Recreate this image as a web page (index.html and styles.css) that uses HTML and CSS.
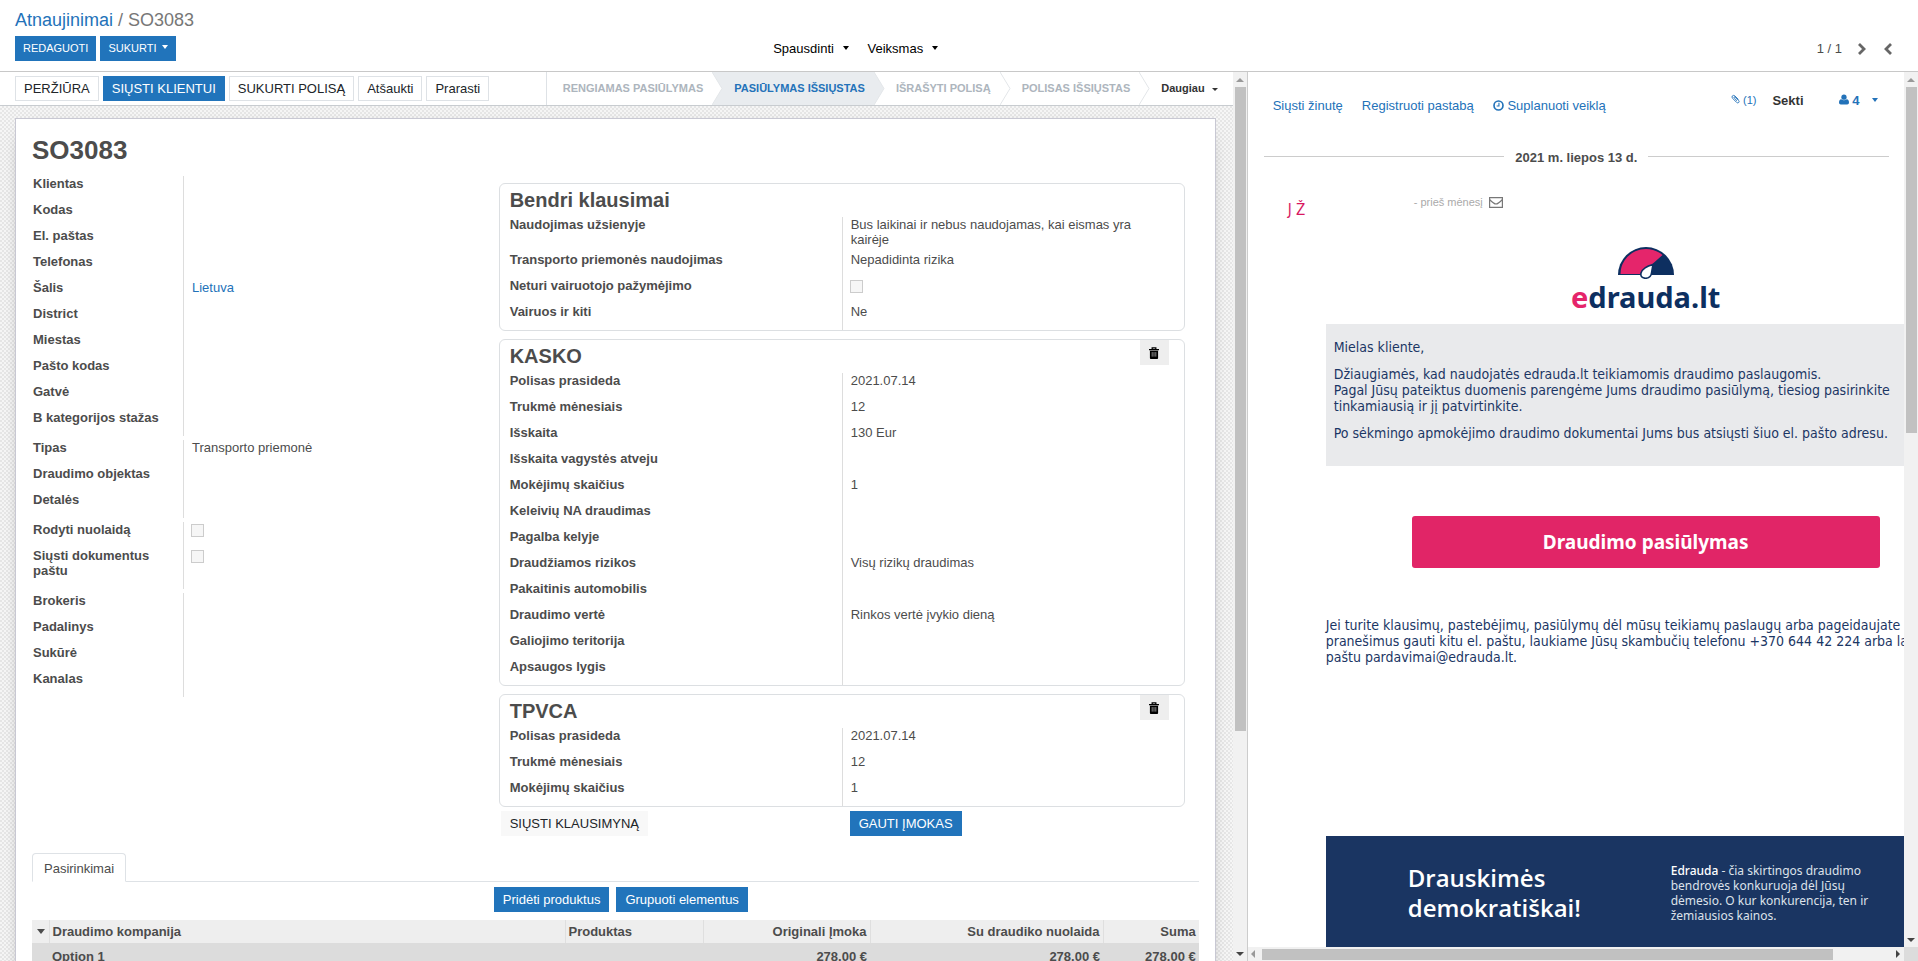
FILE: index.html
```html
<!DOCTYPE html>
<html lang="lt">
<head>
    <meta charset="utf-8">
    <title>SO3083 - Atnaujinimai</title>
    <link rel="stylesheet" href="styles.css">
</head>
<body>
    <header class="control-panel">
        <div class="breadcrumb"><a href="#">Atnaujinimai</a> / <span>SO3083</span></div>
        <div class="cp-row">
            <div class="cp-left">
                <button class="btn btn-primary btn-sm">REDAGUOTI</button>
                <button class="btn btn-primary btn-sm">SUKURTI <i class="caret"></i></button>
            </div>
            <div class="cp-center">
                <button class="btn-plain">Spausdinti <i class="caret"></i></button>
                <button class="btn-plain">Veiksmas <i class="caret"></i></button>
            </div>
            <div class="pager">
                <span>1 / 1</span>
                <button class="btn-plain" aria-label="Kitas"><svg width="9" height="12" viewBox="0 0 9 12"><path d="M2 1l5 5-5 5" fill="none" stroke="#666" stroke-width="2.8"/></svg></button>
                <button class="btn-plain" aria-label="Ankstesnis"><svg width="9" height="12" viewBox="0 0 9 12"><path d="M7 1L2 6l5 5" fill="none" stroke="#666" stroke-width="2.8"/></svg></button>
            </div>
        </div>
    </header>

    <main class="content">
        <section class="form-view">
            <div class="statusbar">
                <div class="status-buttons">
                    <button class="btn btn-default">PERŽIŪRA</button>
                    <button class="btn btn-primary">SIŲSTI KLIENTUI</button>
                    <button class="btn btn-default">SUKURTI POLISĄ</button>
                    <button class="btn btn-default">Atšaukti</button>
                    <button class="btn btn-default">Prarasti</button>
                </div>
                <div class="stages">
                    <button class="stage">RENGIAMAS PASIŪLYMAS<svg class="stage-arrow" viewBox="0 0 11 33"><path d="M0 0L10 16.500L0 33"/></svg></button>
                    <button class="stage active">PASIŪLYMAS IŠSIŲSTAS<svg class="stage-arrow" viewBox="0 0 11 33"><path d="M0 0L10 16.500L0 33"/></svg></button>
                    <button class="stage">IŠRAŠYTI POLISĄ<svg class="stage-arrow" viewBox="0 0 11 33"><path d="M0 0L10 16.500L0 33"/></svg></button>
                    <button class="stage">POLISAS IŠSIŲSTAS<svg class="stage-arrow" viewBox="0 0 11 33"><path d="M0 0L10 16.500L0 33"/></svg></button>
                    <button class="stage more">Daugiau <i class="caret"></i></button>
                </div>
            </div>

            <div class="sheet-bg">
                <div class="sheet">
                    <h1>SO3083</h1>
                    <div class="groups">
                        <div class="group-left">
                            <dl class="fields">
                                <dt>Klientas</dt><dd></dd>
                                <dt>Kodas</dt><dd></dd>
                                <dt>El. paštas</dt><dd></dd>
                                <dt>Telefonas</dt><dd></dd>
                                <dt>Šalis</dt><dd><a href="#">Lietuva</a></dd>
                                <dt>District</dt><dd></dd>
                                <dt>Miestas</dt><dd></dd>
                                <dt>Pašto kodas</dt><dd></dd>
                                <dt>Gatvė</dt><dd></dd>
                                <dt>B kategorijos stažas</dt><dd></dd>
                            </dl>
                            <dl class="fields">
                                <dt>Tipas</dt><dd>Transporto priemonė</dd>
                                <dt>Draudimo objektas</dt><dd></dd>
                                <dt>Detalės</dt><dd></dd>
                            </dl>
                            <dl class="fields">
                                <dt><label for="discount">Rodyti nuolaidą</label></dt><dd><input type="checkbox" id="discount" disabled></dd>
                                <dt><label for="post">Siųsti dokumentus paštu</label></dt><dd><input type="checkbox" id="post" disabled></dd>
                            </dl>
                            <dl class="fields">
                                <dt>Brokeris</dt><dd></dd>
                                <dt>Padalinys</dt><dd></dd>
                                <dt>Sukūrė</dt><dd></dd>
                                <dt>Kanalas</dt><dd></dd>
                            </dl>
                        </div>

                        <div class="group-right">
                            <div class="card">
                                <div class="card-head"><h2>Bendri klausimai</h2></div>
                                <dl class="fields">
                                    <dt>Naudojimas užsienyje</dt><dd>Bus laikinai ir nebus naudojamas, kai eismas yra kairėje</dd>
                                    <dt>Transporto priemonės naudojimas</dt><dd>Nepadidinta rizika</dd>
                                    <dt><label for="licence">Neturi vairuotojo pažymėjimo</label></dt><dd><input type="checkbox" id="licence" disabled></dd>
                                    <dt>Vairuos ir kiti</dt><dd>Ne</dd>
                                </dl>
                            </div>
                            <div class="card">
                                <div class="card-head">
                                    <h2>KASKO</h2>
                                    <button class="btn-trash" aria-label="Ištrinti"><svg width="10" height="12" viewBox="0 0 11 13"><path d="M3.500 2V.8h4V2" fill="none" stroke="#000" stroke-width="1.400"/><path d="M0 2h11v1.600H0zM1 4h9v8q0 1-1 1H2q-1 0-1-1z"/><path d="M3.500 5.500v5M5.500 5.500v5M7.500 5.500v5" stroke="#bbb" stroke-width=".8"/></svg></button>
                                </div>
                                <dl class="fields">
                                    <dt>Polisas prasideda</dt><dd>2021.07.14</dd>
                                    <dt>Trukmė mėnesiais</dt><dd>12</dd>
                                    <dt>Išskaita</dt><dd>130 Eur</dd>
                                    <dt>Išskaita vagystės atveju</dt><dd></dd>
                                    <dt>Mokėjimų skaičius</dt><dd>1</dd>
                                    <dt>Keleivių NA draudimas</dt><dd></dd>
                                    <dt>Pagalba kelyje</dt><dd></dd>
                                    <dt>Draudžiamos rizikos</dt><dd>Visų rizikų draudimas</dd>
                                    <dt>Pakaitinis automobilis</dt><dd></dd>
                                    <dt>Draudimo vertė</dt><dd>Rinkos vertė įvykio dieną</dd>
                                    <dt>Galiojimo teritorija</dt><dd></dd>
                                    <dt>Apsaugos lygis</dt><dd></dd>
                                </dl>
                            </div>
                            <div class="card">
                                <div class="card-head">
                                    <h2>TPVCA</h2>
                                    <button class="btn-trash" aria-label="Ištrinti"><svg width="10" height="12" viewBox="0 0 11 13"><path d="M3.500 2V.8h4V2" fill="none" stroke="#000" stroke-width="1.400"/><path d="M0 2h11v1.600H0zM1 4h9v8q0 1-1 1H2q-1 0-1-1z"/><path d="M3.500 5.500v5M5.500 5.500v5M7.500 5.500v5" stroke="#bbb" stroke-width=".8"/></svg></button>
                                </div>
                                <dl class="fields">
                                    <dt>Polisas prasideda</dt><dd>2021.07.14</dd>
                                    <dt>Trukmė mėnesiais</dt><dd>12</dd>
                                    <dt>Mokėjimų skaičius</dt><dd>1</dd>
                                </dl>
                            </div>
                            <div class="card-actions">
                                <div><button class="btn btn-light">SIŲSTI KLAUSIMYNĄ</button></div>
                                <div><button class="btn btn-primary">GAUTI ĮMOKAS</button></div>
                            </div>
                        </div>
                    </div>

                    <div class="tabs"><a class="tab" href="#">Pasirinkimai</a></div>
                    <div class="table-actions">
                        <button class="btn btn-primary">Pridėti produktus</button>
                        <button class="btn btn-primary">Grupuoti elementus</button>
                    </div>
                    <table class="options">
                        <thead>
                            <tr>
                                <th class="col-toggle"><i class="caret"></i></th>
                                <th class="col-company">Draudimo kompanija</th>
                                <th class="col-products">Produktas</th>
                                <th class="col-original num">Originali Įmoka</th>
                                <th class="col-discount num">Su draudiko nuolaida</th>
                                <th class="num">Suma</th>
                            </tr>
                        </thead>
                        <tbody>
                            <tr>
                                <td></td>
                                <td>Option 1</td>
                                <td></td>
                                <td class="num">278.00 €</td>
                                <td class="num">278.00 €</td>
                                <td class="num">278.00 €</td>
                            </tr>
                        </tbody>
                    </table>
                </div>
            </div>
        </section>
        <div class="scrollbar form-scroll"><i class="arrow up"></i><div class="track"><div class="thumb"></div></div><i class="arrow down"></i></div>

        <aside class="chatter">
            <div class="chatter-body">
                <div class="chatter-top">
                    <div class="chatter-links">
                        <a href="#">Siųsti žinutę</a>
                        <a href="#">Registruoti pastabą</a>
                        <a href="#"><svg width="11" height="11" viewBox="0 0 12 12"><circle cx="6" cy="6" r="4.900" fill="none" stroke="currentColor" stroke-width="1.800"/><path d="M6.500 3v3.500H4" fill="none" stroke="currentColor" stroke-width="1.200"/></svg> Suplanuoti veiklą</a>
                    </div>
                    <div class="followers">
                        <a class="attachments" href="#"><svg width="9" height="10" viewBox="0 0 9 10"><path d="M7.500 5.500L4 2Q2.500.8 1.400 1.900T1.700 4.400L5.600 8.400Q6.800 9.400 7.700 8.500T7.600 6.500L4.200 3.100Q3.500 2.600 3.100 3.100T3.200 4L6 6.800" fill="none" stroke="currentColor" stroke-width=".9"/></svg> (1)</a>
                        <button class="btn-plain follow">Sekti</button>
                        <button class="btn-plain people"><svg width="10" height="11" viewBox="0 0 11 11"><circle cx="5.500" cy="3" r="2.900" fill="currentColor"/><path d="M0 9Q0 5.500 2.500 5.300 5.500 7.500 8.500 5.300 11 5.500 11 9q0 2-2 2H2Q0 11 0 9z" fill="currentColor"/></svg> 4 <i class="caret"></i></button>
                    </div>
                </div>
                <div class="day"><span>2021 m. liepos 13 d.</span></div>
                <div class="message">
                    <div class="avatar">J Ž</div>
                    <div class="message-main">
                        <div class="message-meta">- prieš mėnesį <svg width="14" height="11" viewBox="0 0 14 11"><path d="M.6 .6h12.800v9.800H.6zM.6 2.500Q5 7 7 7t6.400-4.500" fill="none" stroke="#777" stroke-width="1.200"/></svg></div>
                        <div class="email">
                            <div class="logo">
                                <svg width="56" height="32" viewBox="0 0 56 32">
                                    <path d="M0 28A28 28 0 0 1 56 28z" fill="#0d2f60"/>
                                    <path d="M2.500 27A25.500 25 0 0 1 44.500 8L31 20 24 27z" fill="#e5256b"/>
                                    <path d="M35 17.500Q25 20 23 26 22 31 27.500 31.300 33 31 33.500 26z" fill="#fff" stroke="#0d2f60" stroke-width="1.600"/>
                                </svg>
                                <div class="logo-text"><span>e</span>drauda.lt</div>
                            </div>
                            <div class="email-intro">
                                <p>Mielas kliente,</p>
                                <p>Džiaugiamės, kad naudojatės edrauda.lt teikiamomis draudimo paslaugomis.<br>Pagal Jūsų pateiktus duomenis parengėme Jums draudimo pasiūlymą, tiesiog pasirinkite<br>tinkamiausią ir jį patvirtinkite.</p>
                                <p>Po sėkmingo apmokėjimo draudimo dokumentai Jums bus atsiųsti šiuo el. pašto adresu.</p>
                            </div>
                            <a class="offer" href="#">Draudimo pasiūlymas</a>
                            <p class="email-contact">Jei turite klausimų, pastebėjimų, pasiūlymų dėl mūsų teikiamų paslaugų arba pageidaujate<br>pranešimus gauti kitu el. paštu, laukiame Jūsų skambučių telefonu +370 644 42 224 arba laišku el.<br>paštu pardavimai@edrauda.lt.</p>
                            <div class="email-footer">
                                <h3>Drauskimės<br>demokratiškai!</h3>
                                <p><b>Edrauda</b> - čia skirtingos draudimo<br>bendrovės konkuruoja dėl Jūsų<br>dėmesio. O kur konkurencija, ten ir<br>žemiausios kainos.</p>
                            </div>
                        </div>
                    </div>
                </div>
            </div>
            <div class="scrollbar chatter-scroll"><i class="arrow up"></i><div class="track"><div class="thumb"></div></div><i class="arrow down"></i></div>
            <div class="scrollbar horizontal"><i class="arrow left"></i><div class="track"><div class="thumb"></div></div><i class="arrow right"></i></div>
            <div class="scroll-corner"></div>
        </aside>
    </main>
</body>
</html>
```
FILE: styles.css
```css
* {
    box-sizing: border-box;
}
body {
    display: flex;
    flex-direction: column;
    height: 100vh;
    margin: 0;
    overflow: hidden;
    font-family: "Liberation Sans", Arial, sans-serif;
    font-size: 13px;
    line-height: 15px;
    color: #4c4c4c;
    background: #fff;
}
h1, h2, h3, p, dl, dd {
    margin: 0;
}
a {
    color: #2372b9;
    text-decoration: none;
}
button {
    font: inherit;
    cursor: pointer;
}
svg {
    flex: none;
}

/* buttons */
.btn {
    height: 25px;
    padding: 0 8px;
    border: 1px solid transparent;
    white-space: nowrap;
}
.btn-primary {
    background: #2174bb;
    color: #fff;
}
.btn-default {
    background: #fff;
    border-color: #dee2e6;
    color: #212529;
}
.btn-light {
    background: #f8f8f8;
    color: #212529;
}
.btn-sm {
    padding: 0 7px;
    font-size: 11px;
}
.btn-sm .caret {
    margin-left: 2px;
}
.btn-plain {
    padding: 0;
    border: 0;
    background: none;
    color: #000;
}
.caret {
    display: inline-block;
    margin-left: 5px;
    border: 3px solid transparent;
    border-top: 4px solid currentColor;
    border-bottom: 0;
    vertical-align: 3px;
}

/* top panel */
.control-panel {
    flex: none;
    height: 72px;
    padding: 8px 15px 0;
    border-bottom: 1px solid #c8c8c8;
}
.breadcrumb {
    font-size: 18px;
    line-height: 24px;
    color: #777;
}
.cp-row {
    display: grid;
    grid-template-columns: 2fr 2fr 1fr;
    align-items: center;
    margin-top: 4px;
}
.cp-left {
    display: flex;
    gap: 4px;
}
.cp-center {
    display: flex;
    gap: 19px;
    padding-left: 3px;
}
.pager {
    display: flex;
    justify-content: flex-end;
    align-items: center;
    gap: 12px;
    padding-right: 7px;
}
.pager button {
    padding: 0 3px;
}
.pager svg {
    display: block;
}

.content {
    flex: 1;
    display: flex;
    min-height: 0;
}
.form-view {
    flex: 1;
    display: flex;
    flex-direction: column;
    min-width: 0;
    overflow: hidden;
}
.statusbar {
    flex: none;
    display: flex;
    justify-content: space-between;
    height: 34px;
    padding-left: 15px;
    border-bottom: 1px solid #c8ccd0;
}
.status-buttons {
    display: flex;
    align-items: center;
    gap: 4px;
}
.stages {
    display: flex;
    border-left: 1px solid #dee2e6;
}
.stage {
    position: relative;
    padding: 0 9px 0 22px;
    border: 0;
    background: #fff;
    color: #adb5bd;
    font-size: 11px;
    font-weight: bold;
    white-space: nowrap;
}
.stage:first-child {
    padding-left: 16px;
}
.stage.active {
    background: #e9ecef;
    color: #2372b9;
}
.stage-arrow {
    position: absolute;
    z-index: 1;
    top: 0;
    left: 100%;
    width: 11px;
    height: 33px;
    fill: #fff;
    stroke: #e3e6e9;
}
.stage.active .stage-arrow {
    fill: #e9ecef;
}
.stage.more {
    padding-right: 15px;
    color: #333;
}
.more .caret {
    margin-left: 4px;
    border-top-width: 3px;
    vertical-align: 1px;
}

/* sheet */
.sheet-bg {
    flex: 1;
    display: flex;
    min-height: 0;
    padding: 12px 17px 0 15px;
    background: repeating-conic-gradient(#e6e6e6 0 25%, #f6f6f6 0 50%) 0 0 / 4px 4px;
}
.sheet {
    flex: 1;
    min-width: 0;
    height: 1200px;
    padding: 16px;
    border: 1px solid #c8c8d3;
    background: #fff;
    box-shadow: 0 5px 20px -15px #000;
}
h1 {
    padding-bottom: 11px;
    font-size: 26px;
    line-height: 30px;
}
.groups {
    display: grid;
    grid-template-columns: 2fr 3fr;
}
.group-left {
    display: flex;
    flex-direction: column;
    gap: 4px;
}
.fields {
    display: grid;
    grid-template-columns: 151px 1fr;
}
dt {
    padding: 0 14px 11px 1px;
    font-weight: bold;
}
dd {
    min-height: 26px;
    padding: 0 8px 5px;
    border-left: 1px solid #ddd;
}
.group-right {
    display: flex;
    flex-direction: column;
    gap: 8px;
    padding: 7px 14px 0 0;
}
.card {
    border: 1px solid #dcdfe2;
    border-radius: 6px;
}
.card .fields {
    grid-template-columns: 1fr 1fr;
}
.card dt {
    padding-left: 10px;
}
.card dd {
    padding-right: 30px;
}
.card-head {
    display: flex;
    justify-content: space-between;
    height: 33px;
    padding: 0 15px 0 10px;
}
h2 {
    padding-top: 5px;
    font-size: 20px;
    line-height: 23px;
}
.btn-trash {
    display: flex;
    align-items: center;
    justify-content: center;
    width: 29px;
    height: 25px;
    padding: 0;
    border: 0;
    background: #eee;
}
input[type="checkbox"] {
    display: block;
    appearance: none;
    width: 13px;
    height: 13px;
    margin: 2px 0 0 -1px;
    border: 1px solid #ccc;
    background: #f6f6f6;
}
.card-actions {
    display: grid;
    grid-template-columns: 1fr 1fr;
    margin-top: -4px;
}
.card-actions div {
    padding-left: 8px;
}
.card-actions div:first-child {
    padding-left: 2px;
}

.tabs {
    display: flex;
    margin-top: 17px;
    border-bottom: 1px solid #dee2e6;
}
.tab {
    margin-bottom: -1px;
    padding: 7px 11px 5px;
    border: 1px solid #dee2e6;
    border-bottom-color: #fff;
    border-radius: 4px 4px 0 0;
    color: #4c4c4c;
}
.table-actions {
    display: flex;
    justify-content: center;
    gap: 7px;
    padding: 5px 0 8px 11px;
}
.options {
    width: 100%;
    border-collapse: collapse;
    table-layout: fixed;
    font-weight: bold;
}
.options th, .options td {
    padding: 4px 3px;
    text-align: left;
}
.options th {
    background: #eee;
    border-right: 1px solid #dfdfdf;
}
.options th:last-child {
    border-right: 0;
}
.options td {
    height: 30px;
    padding-top: 6px;
    background: #dcdcdc;
    vertical-align: top;
}
.options .num {
    text-align: right;
}
.options .caret {
    margin-left: 2px;
    border-width: 5px 4px 0;
    vertical-align: 2px;
}
.col-toggle {
    width: 17px;
}
.col-company {
    width: 516px;
}
.col-products {
    width: 138px;
}
.col-original {
    width: 167px;
}
.col-discount {
    width: 233px;
}

/* scrollbars */
.scrollbar {
    flex: none;
    display: flex;
    flex-direction: column;
    width: 14px;
    background: #f1f1f1;
}
.scrollbar .track {
    flex: 1;
    padding: 0 1px 0 2px;
}
.scrollbar .thumb {
    height: 100%;
    background: #c1c1c1;
}
.arrow {
    width: 14px;
    height: 15px;
}
.arrow::before {
    content: "";
    display: block;
    width: 0;
    height: 0;
    margin: 6px 0 0 3px;
    border: 4px solid transparent;
}
.arrow.up::before {
    border-top: 0;
    border-bottom-color: #999;
}
.arrow.down::before {
    border-bottom: 0;
    border-top-color: #444;
}
.arrow.left::before {
    margin-top: 3px;
    border-left: 0;
    border-right-color: #999;
}
.arrow.right::before {
    margin: 3px 0 0 6px;
    border-right: 0;
    border-left-color: #444;
}
.form-scroll .thumb {
    height: 75%;
}
.chatter-scroll .thumb {
    height: 41%;
}
.scrollbar.horizontal {
    flex-direction: row;
    width: auto;
    height: 14px;
}
.horizontal .track {
    padding: 2px 0 1px;
}
.horizontal .thumb {
    width: 91%;
}
.scroll-corner {
    background: #dcdcdc;
}

/* chatter */
.chatter {
    display: grid;
    grid-template-columns: 1fr 14px;
    grid-template-rows: 1fr 14px;
    width: 35%;
    border-left: 1px solid #ccc;
}
.chatter-body {
    min-width: 0;
    min-height: 0;
    overflow: hidden;
    padding-left: 16px;
}
.chatter-top {
    display: flex;
    justify-content: space-between;
    padding: 21px 26px 0 9px;
}
.chatter-links {
    display: flex;
    gap: 19px;
    padding-top: 5px;
}
.chatter-links svg {
    vertical-align: -1px;
}
.followers {
    display: flex;
    align-items: flex-start;
    line-height: 15px;
}
.attachments {
    font-size: 11px;
}
.follow {
    margin: 0 35px 0 16px;
    font-weight: bold;
    color: #333;
}
.people {
    color: #2372b9;
    font-weight: bold;
}
.people .caret {
    margin-left: 9px;
}
.day {
    display: flex;
    gap: 11px;
    padding: 37px 15px 0 0;
    font-weight: bold;
    white-space: nowrap;
}
.day::before, .day::after {
    content: "";
    flex: 1;
    height: 6px;
    border-bottom: 1px solid #ccc;
}
.message {
    display: flex;
    padding-top: 30px;
}
.avatar {
    flex: none;
    width: 62px;
    padding: 5px 0 0 24px;
    font-family: "DejaVu Sans Condensed", sans-serif;
    font-size: 15px;
    line-height: 20px;
    color: #d8175f;
}
.message-meta {
    padding-left: 88px;
    font-size: 11px;
    color: #aaa;
}
.message-meta svg {
    margin-left: 3px;
    vertical-align: -2px;
}
.email {
    width: 640px;
    font-family: "DejaVu Sans Condensed", "Noto Sans", sans-serif;
    font-size: 14px;
    line-height: 16px;
    color: #1b3664;
    white-space: nowrap;
}
.logo {
    padding: 37px 0 9px;
    text-align: center;
}
.logo svg {
    display: block;
    margin: 0 auto;
}
.logo-text {
    font-family: "Noto Sans", sans-serif;
    font-size: 29px;
    font-weight: bold;
    line-height: 36px;
    color: #0d2f60;
}
.logo-text span {
    color: #e5256b;
}
.email-intro {
    height: 142px;
    padding: 15px 8px 0;
    background: #e9eaec;
}
.email-intro p {
    margin-bottom: 11px;
}
.offer {
    display: block;
    margin: 50px 86px 49px;
    border-radius: 3px;
    background: #e12567;
    color: #fff;
    font-family: "Noto Sans", sans-serif;
    font-size: 19px;
    font-weight: bold;
    line-height: 52px;
    text-align: center;
}
.email-footer {
    display: flex;
    height: 200px;
    margin-top: 171px;
    padding: 27px 0 0 82px;
    background: #1a3562;
    color: #fff;
    font-family: "Noto Sans", sans-serif;
}
.email-footer h3 {
    width: 263px;
    font-family: "Open Sans", sans-serif;
    font-size: 24px;
    font-weight: 600;
    line-height: 30px;
}
.email-footer p {
    font-size: 12px;
    line-height: 15px;
    color: #dde2ea;
}
.email-footer b {
    font-weight: 500;
    color: #fff;
}
```
